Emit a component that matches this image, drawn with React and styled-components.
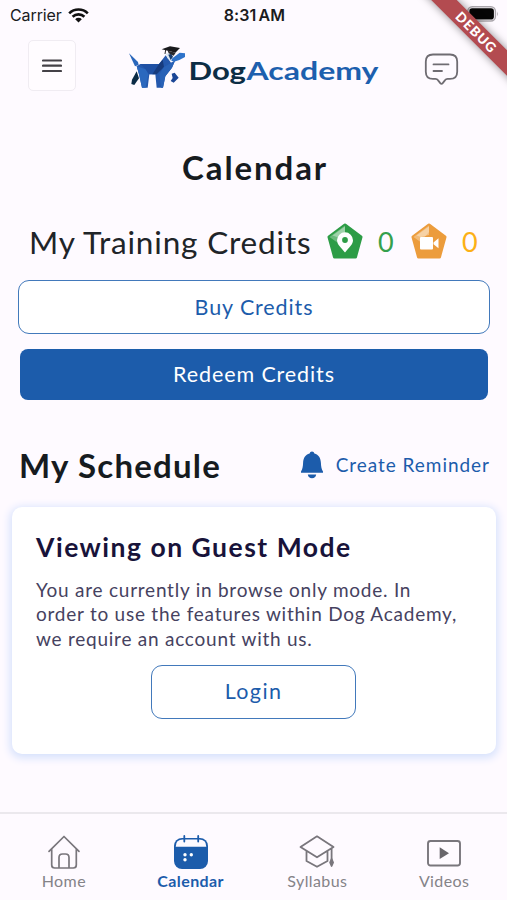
import React from 'react';
import styled, { createGlobalStyle } from 'styled-components';

const BLUE = '#1c5cab';
const INK = '#161b1f';
const GREY = '#858388';

const GlobalStyle = createGlobalStyle`
  * { box-sizing: border-box; }
  body { margin: 0; background: #fefaff; font-family: Lato, sans-serif; }
  button { font-family: inherit; margin: 0; padding: 0; }
  svg { display: block; flex: none; }
`;

const Screen = styled.div`
  position: relative;
  width: 507px;
  height: 900px;
  overflow: hidden;
  display: flex;
  flex-direction: column;
  background: #fefaff;
`;

const StatusBar = styled.div`
  height: 30px;
  display: grid;
  grid-template-columns: 1fr auto 1fr;
  align-items: center;
  padding: 0 8px 0 10px;
  font-family: Inter, sans-serif;
  color: #1b1b1d;
`;

const Carrier = styled.div`
  display: flex;
  align-items: center;
  gap: 6px;
  font-size: 16px;
  letter-spacing: -0.1px;
`;

const Clock = styled.div`
  font-size: 16px;
  font-weight: 600;
  word-spacing: -2px;
  letter-spacing: 0.1px;
`;

const BatterySlot = styled.div`
  display: flex;
  justify-content: flex-end;
  padding-bottom: 2px;
`;

const Header = styled.header`
  height: 61px;
  padding: 10px 48px 0 28px;
  display: flex;
  justify-content: space-between;
  align-items: flex-start;
`;

const MenuButton = styled.button`
  width: 48px;
  height: 51px;
  display: flex;
  align-items: center;
  justify-content: center;
  background: #fffcff;
  border: 1.5px solid #f0ecf2;
  border-radius: 5px;
`;

const LogoLink = styled.a`
  padding: 1px 0 0 8px;
`;

const ChatButton = styled.button`
  border: 0;
  background: none;
  padding-top: 13px;
`;

const Title = styled.h1`
  margin: 56px 0 0;
  padding-left: 3px;
  height: 40px;
  line-height: 40px;
  text-align: center;
  font-size: 33px;
  font-weight: 700;
  letter-spacing: 1.9px;
  color: ${INK};
`;

const Credits = styled.div`
  margin-top: 35px;
  height: 40px;
  padding-left: 29px;
  display: flex;
  align-items: center;
  color: #202428;
`;

const CreditsLabel = styled.span`
  width: 297px;
  font-size: 31.5px;
  line-height: 40px;
  letter-spacing: 0.83px;
  white-space: nowrap;
`;

const CreditCount = styled.span`
  width: ${(p) => p.$width}px;
  padding-left: 14px;
  font-size: 27px;
  line-height: 40px;
  color: ${(p) => p.$color};
`;

const Button = styled.button`
  display: flex;
  align-items: center;
  justify-content: center;
  height: ${(p) => p.$height}px;
  margin: ${(p) => p.$margin};
  padding-bottom: ${(p) => (p.$filled ? 1 : 0)}px;
  font-size: 21.5px;
  letter-spacing: 0.9px;
  color: ${(p) => (p.$filled ? '#fff' : BLUE)};
  background: ${(p) => (p.$filled ? BLUE : '#fff')};
  border: ${(p) => (p.$filled ? '0' : '1.5px solid #4279bb')};
  border-radius: ${(p) => (p.$filled ? 8 : 11)}px;
`;

const SectionHead = styled.div`
  display: flex;
  align-items: center;
  justify-content: space-between;
  height: 44px;
  margin-top: 43px;
  padding: 0 17px 0 19px;
`;

const SectionTitle = styled.h2`
  margin: 0;
  font-size: 33px;
  line-height: 44px;
  font-weight: 700;
  letter-spacing: 1.2px;
  color: ${INK};
`;

const ReminderLink = styled.a`
  display: flex;
  align-items: center;
  gap: 12px;
  padding-bottom: 2px;
  font-size: 19px;
  letter-spacing: 0.96px;
  color: ${BLUE};

  svg { margin-top: 1px; }
`;

const Card = styled.section`
  display: flex;
  flex-direction: column;
  height: 247px;
  margin: 20px 11px 0 12px;
  padding: 24px 24px 0;
  background: #fff;
  border-radius: 10px;
  box-shadow: 0 2px 8px 2px #d5e1fc;
`;

const CardTitle = styled.h3`
  margin: 0;
  font-size: 26.5px;
  line-height: 33px;
  font-weight: 700;
  letter-spacing: 1.5px;
  color: #18133a;
`;

const CardText = styled.p`
  margin: 14px 0 14px;
  font-size: 19px;
  line-height: 24.3px;
  letter-spacing: 0.76px;
  color: #46425f;
  white-space: nowrap;
`;

const LoginButton = styled(Button)`
  align-self: center;
  width: 205px;
  height: 54px;
  padding-bottom: 1px;
  letter-spacing: 1.4px;
  margin-left: -1px;
`;

const TabBar = styled.nav`
  margin-top: auto;
  height: 88px;
  display: grid;
  grid-template-columns: repeat(4, 1fr);
  border-top: 2px solid #ebe8ed;
`;

const Tab = styled.a`
  display: flex;
  flex-direction: column;
  align-items: center;
  padding: 20px 0 0 1px;
  font-size: 16px;
  line-height: 20px;
  letter-spacing: 0.4px;
  font-weight: ${(p) => (p.$active ? 700 : 400)};
  color: ${(p) => (p.$active ? BLUE : GREY)};

  svg { margin-bottom: 1px; }
`;

const DebugRibbon = styled.div`
  position: absolute;
  top: 23px;
  left: 396px;
  width: 160px;
  height: 18px;
  line-height: 18px;
  text-align: center;
  transform: rotate(45deg);
  background: #b34b50;
  box-shadow: 0 0 9px rgba(0, 0, 0, 0.45);
  color: #fff;
  font-size: 13.5px;
  font-weight: 900;
  letter-spacing: 1px;
  padding-left: 1px;
`;

const WifiIcon = () => (
  <svg width="21" height="15" viewBox="0 0 21 15" fill="none" stroke="#111" strokeWidth="2.6">
    <path d="M1.2 5.3a13.2 13.2 0 0 1 18.6 0" />
    <path d="M4.6 8.8a8.4 8.4 0 0 1 11.8 0" />
    <path d="M7.2 11.2a4.7 4.7 0 0 1 6.6 0L10.5 14.6z" fill="#111" stroke="none" />
  </svg>
);

const BatteryIcon = () => (
  <svg width="32" height="16" viewBox="0 0 32 16">
    <rect x=".8" y=".8" width="27.6" height="14.2" rx="4.5" fill="none" stroke="#aaa6ac" strokeWidth="1.4" />
    <rect x="2.3" y="2.3" width="24.6" height="11.2" rx="2.8" fill="#050505" />
    <path d="M30 5.5q1.7 2.4 0 4.8z" fill="#aaa6ac" />
  </svg>
);

const MenuIcon = () => (
  <svg width="20" height="16" viewBox="0 0 20 16" stroke="#444147" strokeWidth="2.2" strokeLinecap="round">
    <path d="M1 2.500h18M1 7.700h18M1 13h18" />
  </svg>
);

const ChatIcon = () => (
  <svg width="35" height="34" viewBox="0 0 35 34" fill="none" stroke="#6f6c72" strokeWidth="1.8" strokeLinejoin="round" strokeLinecap="round">
    <path d="M9 1.5h17q7.2 0 7.200 7.200v10q0 7.200-7.200 7.200h-2.400q-1.700 0-2.500 1.200l-2.400 3q-1.200 1.400-2.400 0l-2.400-3q-.8-1.200-2.500-1.200H9q-7.200 0-7.200-7.200v-10Q1.800 1.500 9 1.500z" />
    <path d="M9.500 11.400h15M9.500 18h8.500" />
  </svg>
);

const Logo = () => (
  <svg width="252" height="54" viewBox="0 0 252 54">
    <g transform="translate(-8 -5.700) scale(.33333)">
      <path d="M27 54l27 26 2 9-11 4z" fill="#2a67bb" />
      <path d="M50 108l7 21-14 20-9-3 2-13z" fill="#0b2b45" />
      <path d="M155 115l9-3 12 15-15 15-9-5 6-9z" fill="#1b4696" />
      <path d="M50 93l11-7h56l20-26 16 22 12-6-9 21-20 26-7 34h-19l-4-40h-18l-5 40H66l-9-40z" fill="#2458ad" />
      <path d="M50 93l27 9 8 15-8 40H66l-9-40z" fill="#2b68be" />
      <path d="M61 86h56l-11 31H88l-11-15z" fill="#1f50a4" />
      <path d="M117 86l11-13 4 22-22 22h-13z" fill="#173b7e" />
      <path d="M132 95l33-19-9 21-20 26-7 34h-6l-5-40z" fill="#2962b7" />
      <path d="M155 70l24-18 16 2v11l-17 9-16 5-8-3z" fill="#2e73ca" />
      <path d="M137 55l15-3 7 12-7 14-9-9z" fill="#dce7f2" />
      <path d="M145 58l7 16 7-10-5-9z" fill="#173b6c" />
      <path d="M125 42l25-9 30 5-14 14-17-4z" fill="#19191c" />
      <path d="M143 46l24 6-6 9-15-7z" fill="#29292c" />
      <path d="M137 44l-2 12" stroke="#242427" strokeWidth="3" />
    </g>
    <g fontFamily="Lato, sans-serif" fontSize="25.500" fontWeight="700">
      <text x="60.500" y="39" textLength="57.500" lengthAdjust="spacingAndGlyphs" fill="#0c2d45">Dog</text>
      <text x="118.500" y="39" textLength="132" lengthAdjust="spacingAndGlyphs" fill="#1d5fae">Academy</text>
    </g>
  </svg>
);

const CreditBadge = ({ color, children }) => (
  <svg width="38" height="40" viewBox="0 0 38 40">
    <path d="M19 3L35 15 29.500 35H8.500L3 15z" fill={color} stroke={color} strokeWidth="3" strokeLinejoin="round" />
    <path d="M3.500 15L19 3.500V10L10.500 20z" fill="#fff" opacity=".3" />
    <path d="M6.500 13.500L19 4.500V13L11 15z" fill="#fff" opacity=".35" />
    {children}
  </svg>
);

const PinGlyph = ({ color }) => (
  <>
    <path d="M19 30.500c-4-5-8-8-8-12.200a8 8 0 0 1 16 0c0 4.200-4 7.200-8 12.200z" fill="#fff" />
    <circle cx="19" cy="18" r="2.900" fill={color} />
  </>
);

const CameraGlyph = () => (
  <>
    <rect x="10" y="15" width="13" height="12.500" rx="1" fill="#fff" />
    <path d="M23.500 20.500l5-4.300v10l-5-4z" fill="#fff" />
  </>
);

const BellIcon = () => (
  <svg width="24" height="28" viewBox="0 0 24 28" fill={BLUE}>
    <path d="M12 .5q2 0 2.400 2c4.300 1.200 6.300 4.600 6.500 9.200.2 4.200.6 6.500 2.100 8.800v1.300H1v-1.300c1.500-2.300 1.900-4.600 2.100-8.800.2-4.600 2.200-8 6.500-9.200Q10 .5 12 .5zM7.800 23.500h8.400Q15.500 27.300 12 27.300T7.800 23.500z" />
  </svg>
);

const HomeIcon = () => (
  <svg width="34" height="36" viewBox="0 0 34 36" fill="none" stroke="#79767c" strokeWidth="1.700" strokeLinejoin="round" strokeLinecap="round">
    <path d="M2 17.300L17 2.500l15 14.800M4.700 15v16q0 3 3 3h18.600q3 0 3-3V15M12 34V23.500q0-3.500 3.500-3.500h3q3.500 0 3.500 3.500V34" />
  </svg>
);

const CalendarIcon = () => (
  <svg width="34" height="36" viewBox="0 0 34 36">
    <rect x="0" y="4" width="34" height="31" rx="8" fill={BLUE} />
    <path d="M1.700 12.700Q1.700 5.600 9 5.600h16q7.300 0 7.300 7.100z" fill="#fefaff" />
    <path d="M10.300 2v5.500M24.200 2v5.500" stroke={BLUE} strokeWidth="1.800" strokeLinecap="round" />
    <g fill="#fff"><circle cx="11" cy="20.800" r="1.700" /><circle cx="17.300" cy="20.800" r="1.700" /><circle cx="11" cy="25.700" r="1.700" /></g>
  </svg>
);

const SyllabusIcon = () => (
  <svg width="36" height="36" viewBox="0 0 36 36" fill="none" stroke="#79767c" strokeWidth="1.800" strokeLinejoin="round">
    <path d="M18 2.300L34.500 13 18 23.300 1.500 13zM7.500 17v10L18 32.800 28.500 27V17M32.600 14.500v11.500" />
    <path d="M32.600 25l-1.500 3.500 1.500 3.500 1.500-3.500z" fill="#79767c" />
  </svg>
);

const VideosIcon = () => (
  <svg width="34" height="36" viewBox="0 0 34 36">
    <rect x="1" y="7" width="32" height="24.500" rx="2.500" fill="none" stroke="#79767c" strokeWidth="1.900" />
    <path d="M12.700 13.300l9.300 5.900-9.300 5.900z" fill="#68656b" />
  </svg>
);

const TABS = [
  { label: 'Home', Icon: HomeIcon },
  { label: 'Calendar', Icon: CalendarIcon, active: true },
  { label: 'Syllabus', Icon: SyllabusIcon },
  { label: 'Videos', Icon: VideosIcon },
];

export default function App() {
  return (
    <Screen>
      <GlobalStyle />
      <StatusBar>
        <Carrier>Carrier <WifiIcon /></Carrier>
        <Clock>8:31 AM</Clock>
        <BatterySlot><BatteryIcon /></BatterySlot>
      </StatusBar>
      <Header>
        <MenuButton aria-label="Menu"><MenuIcon /></MenuButton>
        <LogoLink><Logo /></LogoLink>
        <ChatButton aria-label="Messages"><ChatIcon /></ChatButton>
      </Header>
      <Title>Calendar</Title>
      <Credits>
        <CreditsLabel>My Training Credits</CreditsLabel>
        <CreditBadge color="#2d9c46"><PinGlyph color="#2d9c46" /></CreditBadge>
        <CreditCount $width={46} $color="#35a04c">0</CreditCount>
        <CreditBadge color="#ec9c3c"><CameraGlyph /></CreditBadge>
        <CreditCount $width={40} $color="#fcb016">0</CreditCount>
      </Credits>
      <Button $height={54} $margin="18px 17px 0 18px">Buy Credits</Button>
      <Button $filled $height={51} $margin="15px 19px 0 20px">Redeem Credits</Button>
      <SectionHead>
        <SectionTitle>My Schedule</SectionTitle>
        <ReminderLink><BellIcon />Create Reminder</ReminderLink>
      </SectionHead>
      <Card>
        <CardTitle>Viewing on Guest Mode</CardTitle>
        <CardText>
          You are currently in browse only mode. In<br />
          order to use the features within Dog Academy,<br />
          we require an account with us.
        </CardText>
        <LoginButton>Login</LoginButton>
      </Card>
      <TabBar>
        {TABS.map(({ label, Icon, active }) => (
          <Tab key={label} $active={active}><Icon />{label}</Tab>
        ))}
      </TabBar>
      <DebugRibbon>DEBUG</DebugRibbon>
    </Screen>
  );
}
